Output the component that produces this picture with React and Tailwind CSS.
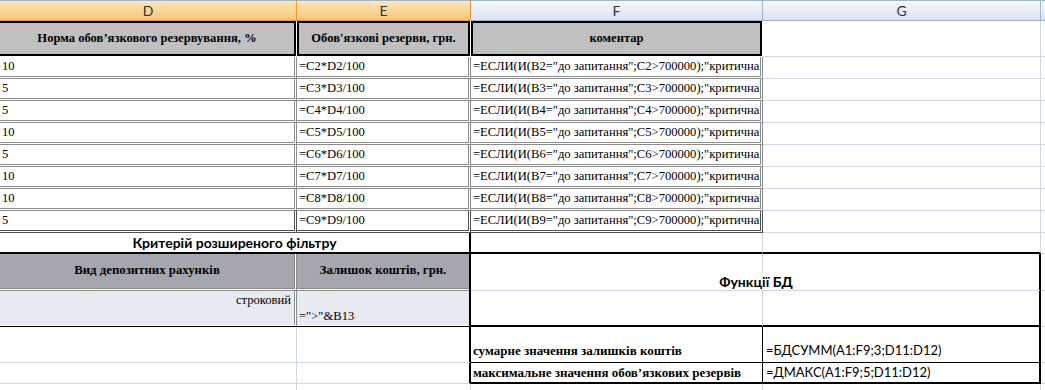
const serif = "font-['Liberation_Serif',serif]";
const sans = "font-['Lato','Open_Sans',sans-serif]";

const rows = [
  ["10", 2],
  ["5", 3],
  ["5", 4],
  ["10", 5],
  ["5", 6],
  ["10", 7],
  ["10", 8],
  ["5", 9],
];

function DataRow({ v, n, last }) {
  const b = last ? "border-[#505050]" : "border-[#8c8c8c]";
  const cell = `h-full shrink-0 border-r-[3px] border-b-[3px] border-double ${b} bg-clip-padding flex items-center px-[2px] overflow-hidden whitespace-nowrap ${serif} text-[12.6px]`;
  return (
    <div className="flex h-[22px]">
      <div className={`w-[297px] ${cell}`}>{v}</div>
      <div className={`w-[174px] ${cell}`}>{`=C${n}*D${n}/100`}</div>
      <div className={`w-[292px] ${cell}`}>{`=ЕСЛИ(И(B${n}="до запитання";C${n}>700000);"критична"`}</div>
      <div className="w-[278px] h-full shrink-0 border-r border-b border-[#d0d7e5]" />
      <div className="flex-1 h-full border-b border-[#d0d7e5]" />
    </div>
  );
}

export default function App() {
  return (
    <div className="w-[1045px] h-[390px] overflow-hidden bg-white text-black">
      {/* column letters */}
      <div className={`flex h-[21px] text-[14px] text-[#333] ${sans}`}>
        <div className="w-[297px] shrink-0 h-full border-t border-t-[#9eb6ce] border-r border-b border-r-[#f29436] border-b-[#f29436] bg-linear-to-b from-[#fce6bd] to-[#f6c674] flex items-center justify-center">D</div>
        <div className="w-[174px] shrink-0 h-full border-t border-t-[#9eb6ce] border-r border-b border-r-[#f29436] border-b-[#f29436] bg-linear-to-b from-[#fce6bd] to-[#f6c674] flex items-center justify-center">E</div>
        <div className="w-[292px] shrink-0 h-full border-t border-r border-b border-[#9eb6ce] bg-linear-to-b from-[#f6f8fc] to-[#dce3ee] flex items-center justify-center">F</div>
        <div className="w-[278px] shrink-0 h-full border-t border-r border-b border-[#9eb6ce] bg-linear-to-b from-[#f6f8fc] to-[#dce3ee] flex items-center justify-center">G</div>
        <div className="flex-1 h-full border-t border-b border-[#9eb6ce] bg-linear-to-b from-[#f6f8fc] to-[#dce3ee]" />
      </div>

      {/* row 1 headers */}
      <div className={`flex h-[36px] ${serif} text-[12.6px] font-bold`}>
        <div className="w-[297px] shrink-0 h-full border-r border-b border-white">
          <div className="h-full border-2 border-l-0 border-black bg-[#c0c0c0] flex items-center justify-center">Норма обов’язкового резервування, %</div>
        </div>
        <div className="w-[174px] shrink-0 h-full border-r border-b border-white">
          <div className="h-full border-2 border-black bg-[#c0c0c0] flex items-center justify-center">Обов'язкові резерви, грн.</div>
        </div>
        <div className="w-[292px] shrink-0 h-full border-r border-b border-white">
          <div className="h-full border-2 border-black bg-[#c0c0c0] flex items-center justify-center">коментар</div>
        </div>
        <div className="w-[278px] shrink-0 h-full border-r border-b border-[#d0d7e5]" />
        <div className="flex-1 h-full border-b border-[#d0d7e5]" />
      </div>

      {rows.map(([v, n], i) => (
        <DataRow key={n} v={v} n={n} last={i === rows.length - 1} />
      ))}

      {/* row 10 */}
      <div className="flex h-[21px]">
        <div className={`w-[471px] shrink-0 h-full border-r-2 border-b-2 border-black flex items-center justify-center font-bold text-[14px] ${sans}`}>Критерій розширеного фільтру</div>
        <div className="w-[292px] shrink-0 h-full border-r border-r-[#d0d7e5] border-b-2 border-b-black" />
        <div className="w-[278px] shrink-0 h-full border-r border-r-[#d0d7e5] border-b-2 border-b-black" />
        <div className="flex-1 h-full border-b border-[#d0d7e5]" />
      </div>

      {/* row 11 */}
      <div className="flex h-[37px]">
        <div className={`w-[297px] shrink-0 h-full border-r-[3px] border-b-[3px] border-double border-[#8c8c8c] bg-[#a6a7ae] bg-clip-padding flex items-center justify-center font-bold text-[12.8px] ${serif}`}>Вид депозитних рахунків</div>
        <div className="w-[174px] shrink-0 h-full border-r-2 border-black">
          <div className={`h-full border-b-[3px] border-double border-[#8c8c8c] bg-[#a6a7ae] bg-clip-padding flex items-center justify-center font-bold text-[12.8px] ${serif}`}>Залишок коштів, грн.</div>
        </div>
        <div className="relative flex">
          <div className="w-[292px] shrink-0 h-full border-r border-b border-[#d0d7e5]" />
          <div className="w-[278px] shrink-0 h-full border-r-2 border-r-black border-b border-b-[#d0d7e5]" />
          <div className="absolute inset-x-0 bottom-[1px] flex justify-center">
            <span className={`bg-white px-1 font-bold text-[14px] leading-[17px] ${sans}`}>Функції БД</span>
          </div>
        </div>
        <div className="flex-1 h-full border-b border-[#d0d7e5]" />
      </div>

      {/* row 12 */}
      <div className={`flex h-[36px] ${serif} text-[12.6px]`}>
        <div className="w-[297px] shrink-0 h-full border-b border-black">
          <div className="h-full border-r-[3px] border-b border-r-[#8c8c8c] border-b-white border-double bg-[#e8eaf2] bg-clip-padding flex items-start justify-end pr-[3px] pt-[2px] leading-[15px]">строковий</div>
        </div>
        <div className="w-[174px] shrink-0 h-full border-r-2 border-r-black border-b border-b-black">
          <div className="h-full border-b border-white bg-[#e8eaf2] bg-clip-padding flex items-end pl-[2px] pb-[1px] leading-[15px]">="&gt;"&amp;B13</div>
        </div>
        <div className="w-[292px] shrink-0 h-full border-r border-r-[#d0d7e5] border-b-2 border-b-black" />
        <div className="w-[278px] shrink-0 h-full border-r-2 border-b-2 border-black" />
        <div className="flex-1 h-full border-b border-[#d0d7e5]" />
      </div>

      {/* row 13 */}
      <div className="flex h-[36px]">
        <div className="w-[297px] shrink-0 h-full border-r border-b border-[#d0d7e5]" />
        <div className="w-[174px] shrink-0 h-full border-r-2 border-r-black border-b border-b-[#d0d7e5]" />
        <div className={`w-[292px] shrink-0 h-full border-r border-b border-black flex items-end pl-[2px] pb-[2px] whitespace-nowrap font-bold text-[13px] ${serif}`}>сумарне значення залишків коштів</div>
        <div className={`w-[278px] shrink-0 h-full border-r-2 border-r-black border-b border-b-black flex items-end pl-[3px] pb-[2px] whitespace-nowrap text-[13px] ${sans}`}>=БДСУММ(A1:F9;3;D11:D12)</div>
        <div className="flex-1 h-full border-b border-[#d0d7e5]" />
      </div>

      {/* row 14 */}
      <div className="flex h-[21px]">
        <div className="w-[297px] shrink-0 h-full border-r border-b border-[#d0d7e5]" />
        <div className="w-[174px] shrink-0 h-full border-r-2 border-r-black border-b border-b-[#d0d7e5]" />
        <div className={`w-[292px] shrink-0 h-full border-r border-r-black border-b-2 border-b-black flex items-center pl-[2px] whitespace-nowrap font-bold text-[13px] ${serif}`}>максимальне значення обов’язкових резервів</div>
        <div className={`w-[278px] shrink-0 h-full border-r-2 border-b-2 border-black flex items-center pl-[3px] whitespace-nowrap text-[13px] ${sans}`}>=ДМАКС(A1:F9;5;D11:D12)</div>
        <div className="flex-1 h-full border-b border-[#d0d7e5]" />
      </div>

      {/* row 15 */}
      <div className="flex h-[20px]">
        <div className="w-[297px] shrink-0 h-full border-r border-[#d0d7e5]" />
        <div className="w-[174px] shrink-0 h-full border-r border-[#d0d7e5]" />
        <div className="w-[292px] shrink-0 h-full border-r border-[#d0d7e5]" />
        <div className="w-[278px] shrink-0 h-full border-r border-[#d0d7e5]" />
        <div className="flex-1 h-full" />
      </div>
    </div>
  );
}
